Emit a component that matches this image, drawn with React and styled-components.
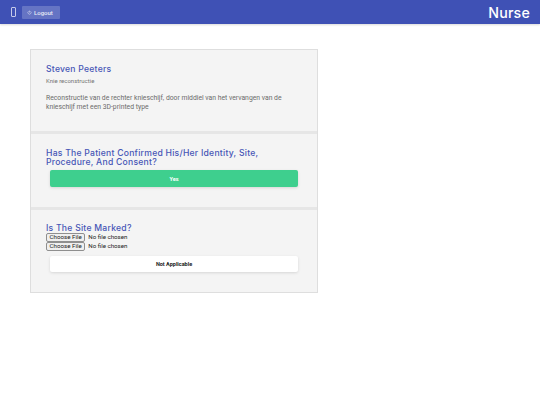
import React from 'react'
import styled, { createGlobalStyle } from 'styled-components'

const Global = createGlobalStyle`
  body {
    margin: 0;
    background: #ffffff;
    font-family: Roboto, "Liberation Sans", sans-serif;
  }
`

export default function App() {
  return (
    <>
      <Global />
      <Header>
        <HeaderLeft>
          <MenuGlyph />
          <LogoutButton>
            <PowerIcon viewBox="0 0 10 10">
              <path d="M3 2.6 A3.2 3.2 0 1 0 7 2.6" fill="none" stroke="#fff" strokeWidth="0.9" />
              <path d="M5 1.2 V5" stroke="#fff" strokeWidth="0.9" />
            </PowerIcon>
            Logout
          </LogoutButton>
        </HeaderLeft>
        <Brand>Nurse</Brand>
      </Header>
      <Main>
        <Card>
          <Section>
            <Title>Steven Peeters</Title>
            <Subtitle>Knie reconstructie</Subtitle>
            <Description>
              Reconstructie van de rechter knieschijf, door middiel van het vervangen van de
              knieschijf met een 3D-printed type
            </Description>
          </Section>
          <Section>
            <Title>Has The Patient Confirmed His/Her Identity, Site, Procedure, And Consent?</Title>
            <ActionButton $variant="success">Yes</ActionButton>
          </Section>
          <Section $last>
            <Title>Is The Site Marked?</Title>
            <Uploads>
              <FileInput type="file" />
              <FileInput type="file" />
            </Uploads>
            <ActionButton $height={16}>Not Applicable</ActionButton>
          </Section>
        </Card>
      </Main>
    </>
  )
}

const Header = styled.header`
  height: 24px;
  background: #3f51b5;
  display: flex;
  align-items: center;
  justify-content: space-between;
  padding: 0 10px 0 11px;
  box-shadow: 0 1px 2px rgba(0, 0, 0, 0.15);
`
const HeaderLeft = styled.div`
  display: flex;
  align-items: center;
  gap: 6px;
`
const MenuGlyph = styled.span`
  width: 3px;
  height: 8px;
  border: 1px solid #c5cae9;
  border-radius: 1px;
`
const LogoutButton = styled.button`
  display: flex;
  align-items: center;
  gap: 2px;
  height: 13px;
  padding: 0 7px 0 5px;
  border: none;
  border-radius: 1px;
  background: #6574c4;
  color: #e8eaf6;
  font-family: Roboto, sans-serif;
  font-size: 6px;
  font-weight: 500;
`
const PowerIcon = styled.svg`
  width: 5px;
  height: 5px;
`
const Brand = styled.div`
  color: #ffffff;
  font-family: Inter, "DejaVu Sans", sans-serif;
  font-size: 14.2px;
  font-weight: 500;
  letter-spacing: 0.2px;
`
const Main = styled.main`
  padding: 25px 0 0 30px;
`
const Card = styled.div`
  width: 286px;
  background: #f4f4f4;
  border: 1px solid #dedede;
`
const Section = styled.section`
  padding: ${p => (p.$last ? '14px' : '15px')} 20px 20px 15px;
  border-bottom: ${p => (p.$last ? 'none' : '3px solid #e6e6e6')};
`
const Title = styled.h2`
  margin: 0;
  color: #4756b6;
  font-family: Inter, "DejaVu Sans", sans-serif;
  font-size: 8.6px;
  font-weight: 500;
  line-height: 9px;
  letter-spacing: 0.25px;
`
const Subtitle = styled.div`
  margin-top: 2px;
  color: #757575;
  font-size: 6px;
  line-height: 9px;
`
const Description = styled.p`
  margin: 9px 0 0;
  color: #6b6b6b;
  font-size: 6.8px;
  line-height: 8.5px;
  max-width: 250px;
`
const Uploads = styled.div`
  margin: 0 0 5px;
  display: flex;
  flex-direction: column;
`
const FileInput = styled.input`
  display: block;
  height: 9px;
  font-family: Roboto, sans-serif;
  font-size: 6.2px;
  line-height: 9px;
  color: #222;

  &::file-selector-button {
    height: 9px;
    margin: 0 3px 0 0;
    padding: 0 2.5px;
    border: 1px solid #8f8f8f;
    border-radius: 2px;
    background: #efefef;
    color: #222;
    font-family: Roboto, sans-serif;
    font-size: 6.2px;
    line-height: 7px;
  }
`
const ActionButton = styled.button`
  display: block;
  width: 248px;
  height: ${p => p.$height || 17}px;
  margin: 3px 0 0 4px;
  border: none;
  border-radius: 2px;
  background: ${p => (p.$variant === 'success' ? '#3ecf8e' : '#ffffff')};
  color: ${p => (p.$variant === 'success' ? '#ffffff' : '#222222')};
  box-shadow: 0 1px 3px rgba(0, 0, 0, 0.12);
  font-family: Roboto, sans-serif;
  font-size: 5.5px;
  font-weight: 700;
`
